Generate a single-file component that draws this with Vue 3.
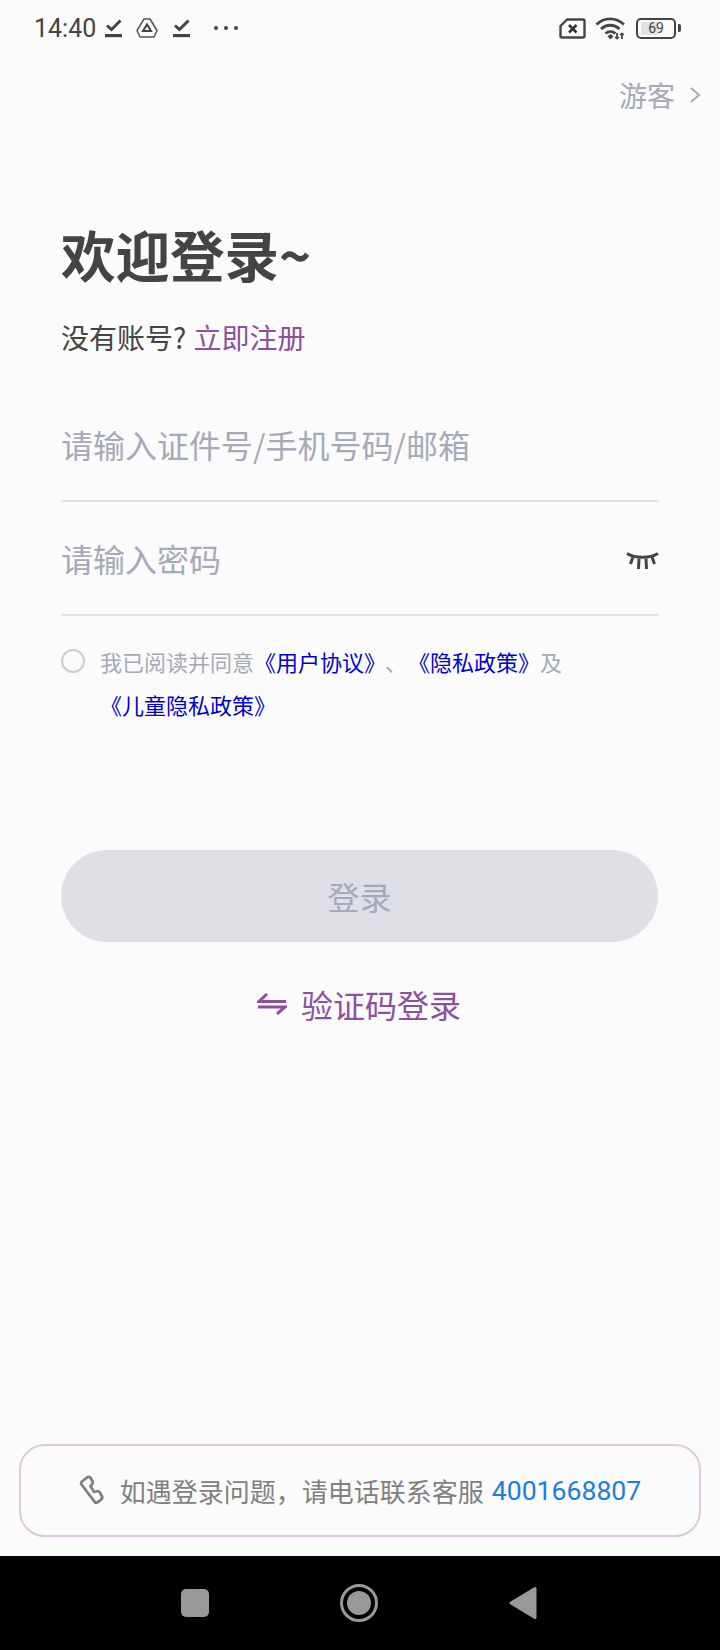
<template>
  <div class="page">
    <div class="status">
      <div class="status-left">
        <span class="time">14:40</span>
        <svg class="check" width="17" height="20" viewBox="0 0 17 20"><path d="M2 7.500 6.500 11.500 15.500 2.500" fill="none" stroke="#444" stroke-width="3"/><rect y="16" width="17" height="3.200" fill="#444"/></svg>
        <svg class="tri" width="22" height="20" viewBox="0 0 22 20"><path d="M8 1h6l7 11.500-3 6.500H4L1 12.500z" fill="none" stroke="#555" stroke-width="1.500" stroke-linejoin="round"/><path d="M11 6.500 15 13H7z" fill="none" stroke="#444" stroke-width="2"/></svg>
        <svg class="check" width="17" height="20" viewBox="0 0 17 20"><path d="M2 7.500 6.500 11.500 15.500 2.500" fill="none" stroke="#444" stroke-width="3"/><rect y="16" width="17" height="3.200" fill="#444"/></svg>
        <span class="dots"><i></i><i></i><i></i></span>
      </div>
      <div class="status-right">
        <svg width="27" height="21" viewBox="0 0 27 21"><path d="M8 1.500h16a1.500 1.500 0 0 1 1.500 1.500v15a1.500 1.500 0 0 1-1.500 1.500H3A1.500 1.500 0 0 1 1.500 18V8z" fill="none" stroke="#444" stroke-width="2.400" stroke-linejoin="round"/><path d="M10 7l7.500 7.500M17.500 7 10 14.500" stroke="#333" stroke-width="2.600"/></svg>
        <svg class="wifi" width="31" height="24" viewBox="0 0 31 24"><g fill="none" stroke="#444" stroke-width="2.800"><path d="M1.500 8.500C9 1 21 1 29 8.500"/><path d="M6 13c5.500-5 13-5 18.500 0"/><path d="M10.500 17.500c3-2.500 7-2.500 10 0"/></g><path d="M12.500 20.500l3-2.500 3 2.500-3 3z" fill="#444"/><path d="M22 17v6M27 17v6" stroke="#444" stroke-width="1.800"/><path d="M20 21l2 2 2-2M25 19l2-2 2 2" fill="none" stroke="#444" stroke-width="1.200"/></svg>
        <div class="battery">
          <div class="battery-body"><span class="battery-fill"></span><span class="battery-num">69</span></div>
          <span class="battery-tip"></span>
        </div>
      </div>
    </div>

    <div class="guest">
      <span>游客</span>
      <svg width="12" height="18" viewBox="0 0 12 18"><path d="M2 2l8 7-8 7" fill="none" stroke="#a6a9b8" stroke-width="2"/></svg>
    </div>

    <main class="form">
      <h1 class="title">欢迎登录~</h1>
      <p class="register">没有账号? <a>立即注册</a></p>

      <div class="field">
        <span class="placeholder">请输入证件号/手机号码/邮箱</span>
      </div>
      <div class="field">
        <span class="placeholder">请输入密码</span>
        <svg class="eye" width="33" height="20" viewBox="0 0 33 20"><g fill="none" stroke="#444" stroke-width="3"><path d="M1 2.500C9 7.500 24 7.500 32 2.500"/><path d="M7 6l-2.500 7M13 7.500 12.500 18M20 7.500l.5 10.500M26 6l2.500 7"/></g></svg>
      </div>

      <div class="agree">
        <span class="radio"></span>
        <div class="agree-text">
          <div>我已阅读并同意<a>《用户协议》</a><span class="sep">、</span><a>《隐私政策》</a>及</div>
          <div class="agree-second"><a>《儿童隐私政策》</a></div>
        </div>
      </div>

      <button class="login" type="button">登录</button>

      <div class="switch">
        <svg width="30" height="22" viewBox="0 0 30 22"><path d="M10 1 2 8.500h27" fill="none" stroke="#8e4f9e" stroke-width="3"/><path d="M1 14h27l-8 7" fill="none" stroke="#8e4f9e" stroke-width="3"/></svg>
        <span>验证码登录</span>
      </div>
    </main>

    <div class="help">
      <svg width="26" height="31" viewBox="0 0 26 31"><path d="M3 6.500 8 2.500c1.500-1 3.500-.5 4 1l1.500 3c.5 1.300 0 2.500-1 3.500l-1 1 3.500 6 2-.5c1.500-.5 3-.5 3.800.8l2 3.700c.8 1.500.3 3-1 3.800l-3.300 2.500c-1 .6-2.200.3-2.800-.5L2.500 9.500C2 8.500 2.200 7.200 3 6.500z" fill="none" stroke="#808080" stroke-width="2.800" stroke-linejoin="round"/></svg>
      <span class="help-text">如遇登录问题，请电话联系客服</span>
      <span class="help-phone">4001668807</span>
    </div>

    <div class="navbar">
      <span class="nav-square"></span>
      <span class="nav-circle"><i></i></span>
      <svg width="28" height="34" viewBox="0 0 28 34"><path d="M26 2.500v29L2 17z" fill="#999" stroke="#999" stroke-width="3" stroke-linejoin="round"/></svg>
    </div>
  </div>
</template>

<script setup>
</script>

<style>
html,
body {
  margin: 0;
  background: #fbfbfc;
}
</style>

<style scoped>
.page {
  width: 720px;
  height: 1650px;
  display: flex;
  flex-direction: column;
  background: #fbfbfc;
  font-family: "Noto Sans CJK SC", "Noto Sans", sans-serif;
  overflow: hidden;
}

.status {
  height: 56px;
  padding: 0 39px 0 34px;
  display: flex;
  align-items: center;
  justify-content: space-between;
  box-sizing: border-box;
}

.status-left,
.status-right {
  display: flex;
  align-items: center;
}

.time {
  font-family: Roboto, sans-serif;
  font-size: 25px;
  color: #444;
  margin-right: 9px;
}

.tri {
  margin: 0 15px 0 14px;
}

.dots {
  display: flex;
  gap: 6px;
  margin-left: 24px;
}

.dots i {
  width: 4px;
  height: 4px;
  border-radius: 50%;
  background: #444;
}

.wifi {
  margin: 0 10px 0 9px;
}

.battery {
  display: flex;
  align-items: center;
  gap: 2px;
}

.battery-body {
  position: relative;
  width: 36px;
  height: 17px;
  border: 2px solid #444;
  border-radius: 5px;
  display: flex;
  align-items: center;
  justify-content: center;
}

.battery-fill {
  position: absolute;
  left: 3px;
  top: 2px;
  bottom: 2px;
  width: 17px;
  background: #e2e2e2;
}

.battery-num {
  position: relative;
  font-family: Roboto, sans-serif;
  font-size: 14px;
  color: #444;
}

.battery-tip {
  width: 3px;
  height: 8px;
  border-radius: 0 2px 2px 0;
  background: #444;
}

.guest {
  align-self: flex-end;
  display: flex;
  align-items: center;
  gap: 14px;
  margin: 16px 19px 0 0;
  height: 46px;
  font-size: 28px;
  color: #a6a9b8;
}

.form {
  flex: 1;
  padding: 0 61px;
}

.title {
  margin: 101px 0 0;
  font-size: 54.500px;
  line-height: 70px;
  font-weight: 700;
  color: #444;
}

.register {
  margin: 28px 0 0;
  font-size: 28px;
  line-height: 40px;
  color: #444;
}

.register a {
  color: #8e4f9e;
  margin-left: 1px;
}

.field {
  height: 114px;
  display: flex;
  align-items: center;
  justify-content: space-between;
  border-bottom: 2px solid #e2e2e4;
  box-sizing: border-box;
}

.field:first-of-type {
  margin-top: 31px;
}

.placeholder {
  font-size: 32px;
  color: #a6a9b8;
}

.eye {
  margin-top: 5px;
}

.agree {
  display: flex;
  margin-top: 33px;
}

.radio {
  flex: none;
  width: 24px;
  height: 24px;
  border: 2px solid #cccccc;
  border-radius: 50%;
  box-sizing: border-box;
}

.agree-text {
  margin: -3px 0 0 15px;
  font-size: 22px;
  line-height: 30px;
  color: #a6a9b8;
}

.agree-text a {
  color: #0000cc;
}

.sep {
  margin: 0 12px 0 10px;
}

.agree-second {
  margin-top: 13px;
}

.login {
  display: block;
  width: 597px;
  height: 92px;
  margin-top: 131px;
  padding: 0;
  border: none;
  border-radius: 46px;
  background: #dfe0e6;
  color: #a6a9b8;
  font-family: inherit;
  font-size: 32px;
}

.switch {
  display: flex;
  align-items: center;
  justify-content: center;
  gap: 14px;
  margin: 39px 0 0 -2px;
  height: 46px;
  font-size: 32px;
  color: #8e4f9e;
}

.help {
  height: 93px;
  margin: 0 19px 19px;
  border: 2px solid #e0c8e0;
  border-radius: 26px;
  box-sizing: border-box;
  display: flex;
  align-items: center;
  justify-content: center;
}

.help-text {
  margin-left: 15px;
  font-size: 26px;
  color: #808080;
}

.help-phone {
  margin-left: 8px;
  font-family: Roboto, sans-serif;
  font-size: 26.600px;
  color: #1a7de0;
}

.navbar {
  position: relative;
  height: 94px;
  background: #000;
  display: flex;
  align-items: center;
  justify-content: space-between;
  padding: 0 183px 0 181px;
  box-sizing: border-box;
}

.nav-square {
  width: 28px;
  height: 28px;
  border-radius: 5px;
  background: #999;
}

.nav-circle {
  width: 38px;
  height: 38px;
  border: 3px solid #999;
  border-radius: 50%;
  box-sizing: border-box;
  display: flex;
  align-items: center;
  justify-content: center;
}

.nav-circle i {
  width: 24px;
  height: 24px;
  border-radius: 50%;
  background: #999;
}
</style>
